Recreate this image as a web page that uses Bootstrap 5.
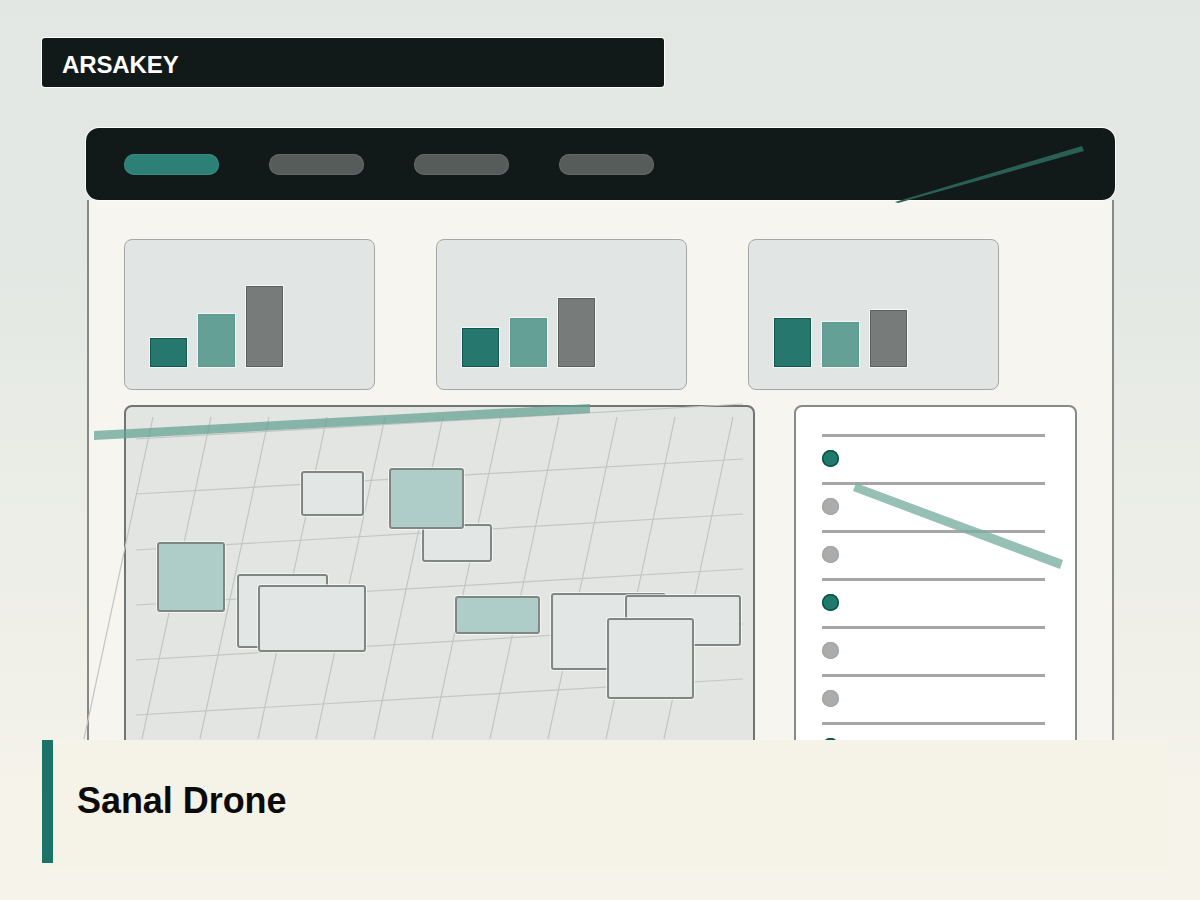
<!DOCTYPE html>
<html lang="tr">
<head>
<meta charset="utf-8">
<title>Sanal Drone</title>
<link href="https://cdn.jsdelivr.net/npm/bootstrap@5.3.0/dist/css/bootstrap.min.css" rel="stylesheet">
<style>
html,body{height:900px;overflow:hidden}
body{background:linear-gradient(180deg,#e2e7e4 0,#e3e8e4 250px,#f5f3ea 800px,#f5f3ea 900px);font-family:"Liberation Sans",Arial,sans-serif}
.stage{width:1200px;height:900px;padding:38px 85px 0 42px}
.brandbar{width:622px;height:49px;padding:4px 0 0 20px;background:#121a19;color:#fff;font-size:24px;font-weight:700;border-radius:3px;box-shadow:0 0 0 1px #fff;letter-spacing:-.1px}
.winframe{width:1029px;height:740px;margin:41px 0 0 44px;padding:0 1px}
.winbody{flex:1 1 auto;background:#f6f5f0;border:solid #868a88;border-width:0 2px 2px;padding:39px 35px 0;min-height:0}
.topnav{width:1029px;height:72px;margin-left:-1px;padding-left:38px;gap:50px;background:#121a19;border-radius:13px;box-shadow:0 0 0 1px #fbfbf8;position:relative;z-index:1}
.pillitem{width:95px;height:21px;background:#555c5a;box-shadow:inset 0 0 0 1px #626866}
.pillitem.on{background:#2c8075;box-shadow:inset 0 0 0 1px #358a7e}
.navslash{position:absolute;left:0;top:0;overflow:visible;pointer-events:none}
.statrow{display:grid;grid-template-columns:repeat(3,251px);gap:61px}
.statcard{height:151px;background:#e1e5e3;border:1.5px solid #a5a8a6;border-radius:8px;padding:0 0 22.5px 24.5px;gap:11px;display:flex;flex-direction:row;align-items:flex-end}
.vbar{width:37px;box-shadow:0 0 0 1px #f3f6f4}
.vbar.b1{background:#26786e;border:1px solid #13564c}
.vbar.b2{background:#65a096;border:1px solid #5b9a8e}
.vbar.b3{background:#777b79;border:1px solid #5d6260}
.h29{height:29px}.h53{height:53px}.h81{height:81px}.h39{height:39px}.h49{height:49px}.h69{height:69px}.h45{height:45px}.h57{height:57px}
.mainrow{margin-top:15px;gap:39px;height:460px}
.mapbox{width:631px;background:#e3e5e2;border:2px solid #6f7573;border-radius:8px 8px 0 0;position:relative}
.mapsvg{position:absolute;left:0;top:0;overflow:visible;z-index:1}
.mapsvg.over{z-index:3;pointer-events:none}
.nd{position:absolute;z-index:2;border:2px solid #808684;border-radius:3px;background:#e2e6e4;box-shadow:0 0 0 1px rgba(255,255,255,.6)}
.nd.tl{background:#aecdc9}
.n1{left:175px;top:64px;width:63px;height:45px}
.n3{left:296px;top:117px;width:70px;height:38px}
.n2{left:263px;top:61px;width:75px;height:61px}
.n4{left:31px;top:135px;width:68px;height:70px}
.n5{left:111px;top:167px;width:91px;height:74px}
.n6{left:132px;top:178px;width:108px;height:67px}
.n7{left:329px;top:189px;width:85px;height:38px}
.n8{left:425px;top:186px;width:115px;height:77px}
.n9{left:499px;top:188px;width:116px;height:51px}
.n10{left:481px;top:211px;width:87px;height:81px}
.listbox{width:283px;background:#fff;border:2px solid #868a88;border-radius:8px 8px 0 0;padding:27px 0 0 26px;position:relative}
.lrow{width:223px;height:48px;border-top:3px solid #a5a7a6}
.ldot{width:17px;height:17px;margin-top:-3px;background:#abadab;box-shadow:inset 0 0 0 1px #a0a3a1}
.ldot.live{background:#1f7a6c;box-shadow:inset 0 0 0 1.5px #0d5146}
.listbar{position:absolute;left:0;top:0;overflow:visible;pointer-events:none}
.captionbar{position:absolute;left:42px;top:740px;width:1126px;height:130px;background:#f5f2e8;z-index:5}
.capmark{width:11px;height:123px;background:#1c7468;margin-right:24px}
.captext{height:121px;font-size:36px;font-weight:700;color:#0b0b0b;margin:0;line-height:1;letter-spacing:-.05px}
</style>
</head>
<body>
<div class="stage position-relative">
  <div class="brandbar d-flex align-items-center">ARSAKEY</div>

  <div class="winframe d-flex flex-column">
    <nav class="topnav d-flex align-items-center">
      <span class="pillitem on rounded-pill d-block"></span>
      <span class="pillitem rounded-pill d-block"></span>
      <span class="pillitem rounded-pill d-block"></span>
      <span class="pillitem rounded-pill d-block"></span>
      <svg class="navslash" width="1029" height="73" viewBox="86 128 1029 73" aria-hidden="true"><polygon points="1082,146 1084,151 898,203 895,202" fill="#2a5f53"/></svg>
    </nav>
    <div class="winbody">
      <div class="statrow">
        <div class="statcard"><div class="vbar b1 h29"></div><div class="vbar b2 h53"></div><div class="vbar b3 h81"></div></div>
        <div class="statcard"><div class="vbar b1 h39"></div><div class="vbar b2 h49"></div><div class="vbar b3 h69"></div></div>
        <div class="statcard"><div class="vbar b1 h49"></div><div class="vbar b2 h45"></div><div class="vbar b3 h57"></div></div>
      </div>
      <div class="mainrow d-flex">
        <div class="mapbox">
          <svg class="mapsvg" width="627" height="450" viewBox="126 408 627 450" aria-hidden="true">
            <g stroke="#c3c6c3" stroke-width="1.2" fill="none">
              <path d="M153 418L84 740M211 418L142 740M269 418L200 740M327 418L258 740M385 418L316 740M443 418L374 740M501 418L432 740M559 418L490 740M617 418L548 740M675 418L606 740M733 418L664 740"/>
              <path d="M136 440L743 405M136 495L743 460M136 551L743 515M136 606L743 570M136 661L743 625M136 716L743 680"/>
            </g>
          </svg>
          <div class="nd n1"></div>
          <div class="nd n3"></div>
          <div class="nd tl n2"></div>
          <div class="nd tl n4"></div>
          <div class="nd n5"></div>
          <div class="nd n6"></div>
          <div class="nd tl n7"></div>
          <div class="nd n8"></div>
          <div class="nd n9"></div>
          <div class="nd n10"></div>
          <svg class="mapsvg over" width="627" height="450" viewBox="126 408 627 450" aria-hidden="true">
            <polygon points="94,432 590,405 590,414 94,441" fill="#5f9f90" fill-opacity=".7"/>
          </svg>
        </div>
        <div class="listbox">
          <div class="lrow d-flex align-items-center"><span class="ldot live rounded-circle d-block"></span></div>
          <div class="lrow d-flex align-items-center"><span class="ldot rounded-circle d-block"></span></div>
          <div class="lrow d-flex align-items-center"><span class="ldot rounded-circle d-block"></span></div>
          <div class="lrow d-flex align-items-center"><span class="ldot live rounded-circle d-block"></span></div>
          <div class="lrow d-flex align-items-center"><span class="ldot rounded-circle d-block"></span></div>
          <div class="lrow d-flex align-items-center"><span class="ldot rounded-circle d-block"></span></div>
          <div class="lrow d-flex align-items-center"><span class="ldot live rounded-circle d-block"></span></div>
          <svg class="listbar" width="279" height="450" viewBox="796 408 279 450" aria-hidden="true">
            <polygon points="856,484 1063,561 1060,570 853,492" fill="#7db0a3" fill-opacity=".8"/>
          </svg>
        </div>
      </div>
    </div>
  </div>

  <div class="captionbar d-flex align-items-start">
    <div class="capmark"></div>
    <h1 class="captext d-flex align-items-center">Sanal Drone</h1>
  </div>
</div>
<script src="https://cdn.jsdelivr.net/npm/bootstrap@5.3.0/dist/js/bootstrap.bundle.min.js"></script>
</body>
</html>
